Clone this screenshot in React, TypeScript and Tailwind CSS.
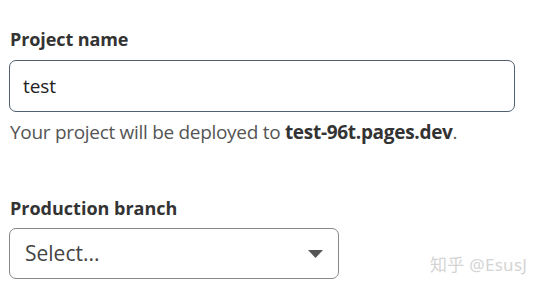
import React from "react"

const App = () => {
  return (
    <div
      className="w-[540px] h-[289px] bg-white overflow-hidden relative"
      style={{ fontFamily: '"Open Sans", "Noto Sans", sans-serif' }}
    >
      <div className="pt-[27px] pl-[9px] flex flex-col">
        <label className="pl-[1px] text-[18px] leading-[24px] font-bold text-[#333333] tracking-[-0.1px]">
          Project name
        </label>
        <div className="mt-[9px] w-[506px] h-[52px] border border-[#4f6070] rounded-[7px] flex items-center pl-[13px]">
          <span className="text-[19px] text-[#222222] tracking-[-0.1px]">test</span>
        </div>
        <p className="mt-[8px] pl-[1px] text-[19px] leading-[24px] text-[#555555] tracking-[-0.3px]">
          Your project will be deployed to{" "}
          <span className="font-bold text-[#333333]">test-96t.pages.dev</span>.
        </p>

        <label className="mt-[52px] pl-[1px] text-[18px] leading-[24px] font-bold text-[#333333] tracking-[0px]">
          Production branch
        </label>
        <div className="mt-[8px] w-[330px] h-[51px] border border-[#888888] rounded-[7px] flex items-center justify-between pl-[15px] pr-[15px]">
          <span className="text-[21px] text-[#444444] tracking-[0px]">Select...</span>
          <svg width="15" height="8" viewBox="0 0 15 8">
            <path d="M0 0 L15 0 L7.5 8 Z" fill="#555555" />
          </svg>
        </div>
      </div>
      <div
        className="absolute left-[430px] top-[252px] text-[17px] text-[#d4d4d4] tracking-[0.3px]"
        style={{ fontFamily: '"Noto Sans", "Noto Sans CJK SC", sans-serif' }}
      >
        知乎 @EsusJ
      </div>
    </div>
  )
}

export default App
